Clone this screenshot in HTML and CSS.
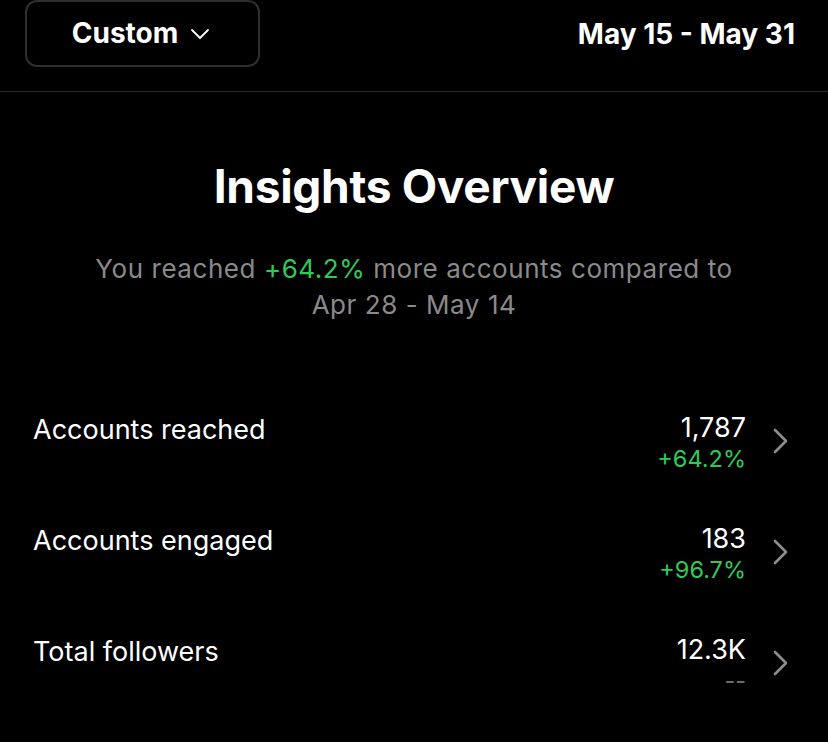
FILE: index.html
```html
<!DOCTYPE html>
<html>
<head>
<meta charset="utf-8">
<link rel="stylesheet" href="styles.css">
</head>
<body>
<div class="screen">
  <header class="topbar">
    <button class="range-btn">
      <span>Custom</span>
      <svg class="caret" width="20" height="12" viewBox="0 0 20 12"><path d="M2 2 L10 10 L18 2" fill="none" stroke="#fff" stroke-width="1.8" stroke-linecap="round" stroke-linejoin="round"/></svg>
    </button>
    <div class="dates">May 15 - May 31</div>
  </header>
  <section class="overview">
    <h1 class="title">Insights Overview</h1>
    <p class="summary">You reached <span class="green">+64.2%</span> more accounts compared to<br>Apr 28 - May 14</p>
  </section>
  <ul class="stats">
    <li class="stat">
      <span class="label">Accounts reached</span>
      <span class="values"><span class="num">1,787</span><span class="delta green">+64.2%</span></span>
      <svg class="chev" width="18" height="26" viewBox="0 0 18 26"><path d="M3 2 L14 13 L3 24" fill="none" stroke="#8e8e8e" stroke-width="2.6" stroke-linecap="round" stroke-linejoin="round"/></svg>
    </li>
    <li class="stat">
      <span class="label">Accounts engaged</span>
      <span class="values"><span class="num">183</span><span class="delta green">+96.7%</span></span>
      <svg class="chev" width="18" height="26" viewBox="0 0 18 26"><path d="M3 2 L14 13 L3 24" fill="none" stroke="#8e8e8e" stroke-width="2.6" stroke-linecap="round" stroke-linejoin="round"/></svg>
    </li>
    <li class="stat">
      <span class="label">Total followers</span>
      <span class="values"><span class="num">12.3K</span><span class="delta muted">--</span></span>
      <svg class="chev" width="18" height="26" viewBox="0 0 18 26"><path d="M3 2 L14 13 L3 24" fill="none" stroke="#8e8e8e" stroke-width="2.6" stroke-linecap="round" stroke-linejoin="round"/></svg>
    </li>
  </ul>
</div>
</body>
</html>
```
FILE: styles.css
```css
* { box-sizing: border-box; }
html, body { margin: 0; padding: 0; background: #000; }
body {
  font-family: Inter, "Noto Sans", "Liberation Sans", sans-serif;
  color: #fff;
  width: 828px;
  height: 742px;
  overflow: hidden;
}
.screen { display: flex; flex-direction: column; }
.topbar {
  display: flex;
  align-items: center;
  justify-content: space-between;
  height: 92px;
  padding: 0 33px 25px 25px;
  border-bottom: 1.5px solid #2b2b2b;
}
.range-btn {
  display: flex;
  align-items: center;
  justify-content: center;
  gap: 12px;
  width: 235px;
  height: 67px;
  background: #000;
  border: 2px solid #2f2f2f;
  border-radius: 12px;
  color: #fff;
  font-family: inherit;
  font-size: 28px;
  font-weight: 700;
  padding: 0 3px 0 0;
}
.caret { margin-top: 2px; }
.dates {
  font-size: 28px;
  font-weight: 700;
  padding-top: 2px;
}
.overview {
  display: flex;
  flex-direction: column;
  align-items: center;
  text-align: center;
}
.title {
  margin: 66px 0 0;
  font-size: 46px;
  font-weight: 700;
  letter-spacing: -0.3px;
  line-height: 56px;
}
.summary {
  margin: 37px 0 0;
  font-size: 26px;
  letter-spacing: 0.55px;
  line-height: 36px;
  color: #8a8a8a;
}
.green { color: #2fcb5a; }
.muted { color: #6e6e6e; }
.stats {
  list-style: none;
  margin: 91px 0 0;
  padding: 0 38px 0 33px;
  display: flex;
  flex-direction: column;
  gap: 47px;
}
.stat {
  display: flex;
  align-items: flex-start;
  height: 64px;
}
.label {
  flex: 1;
  font-size: 27px;
  line-height: 32px;
}
.values {
  display: flex;
  flex-direction: column;
  align-items: flex-end;
  margin-top: -2px;
}
.num { font-size: 27px; line-height: 32px; }
.delta { font-size: 23.5px; line-height: 30px; }
.chev { margin: 14px 0 0 26px; }
```
